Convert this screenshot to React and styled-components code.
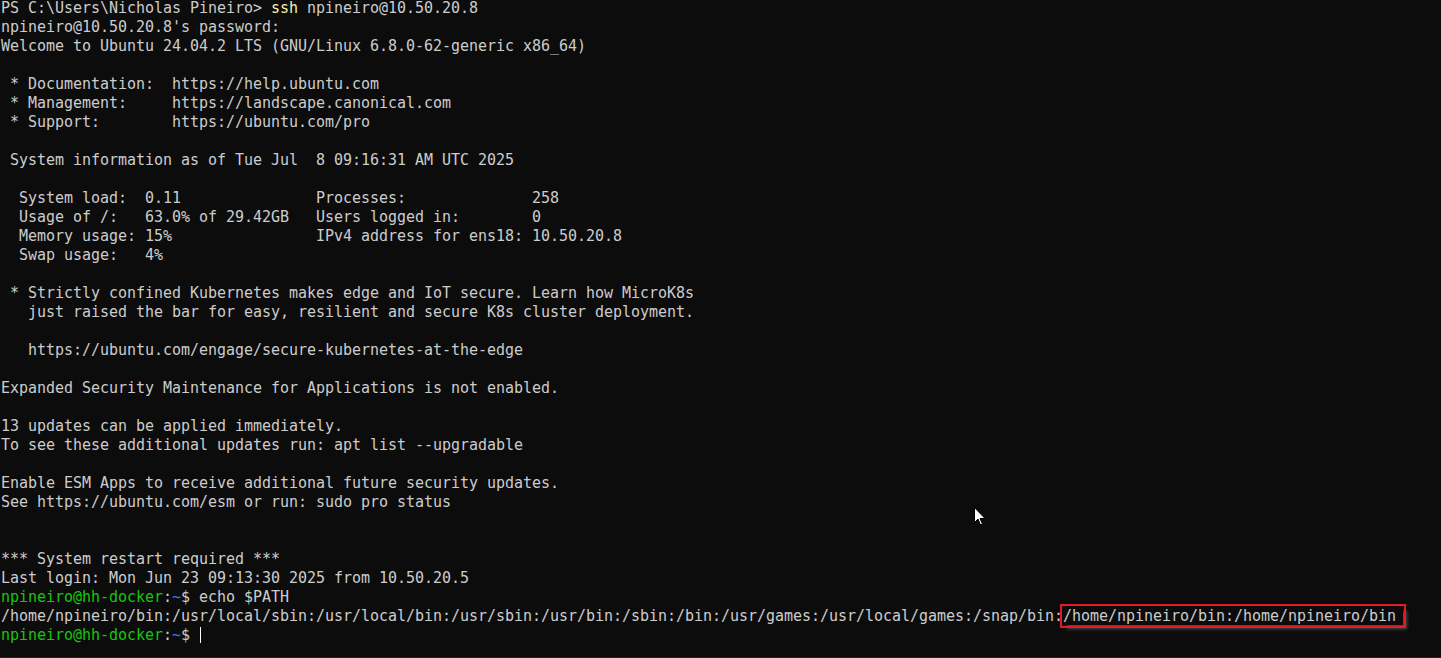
import React from "react";
import styled, {createGlobalStyle} from "styled-components";

const Global = createGlobalStyle`
    html, body {
        margin: 0;
        padding: 0;
        background: #0c0c0c;
    }
    * { box-sizing: border-box; }
`

const Screen = styled.div`
    position: relative;
    height: 658px;
    overflow: hidden;
    background: #0c0c0c;
    border-bottom: 1px solid #2a2230;
    color: #cccccc;
    font-family: "DejaVu Sans Mono", "Liberation Mono", monospace;
    font-size: 15px;
    letter-spacing: -0.03px;
    line-height: 19px;
    padding: 0 0 0 1px;
`

const Output = styled.div`
    margin-top: -1px;
`

const Line = styled.div`
    white-space: pre;
    height: 19px;
`

const Tint = styled.span`
    color: ${props => props.color};
`

const Marked = styled.span`
    padding-right: 7px;
    outline: 2px solid #e41b23;
    outline-offset: 1px;
    box-shadow: 4px 4px 3px rgba(80, 80, 80, 0.95);
`

const Caret = styled.span`
    display: inline-block;
    width: 1px;
    height: 16px;
    background: #ffffff;
    vertical-align: -3px;
    margin-left: 1px;
`

const Pointer = styled.svg`
    position: absolute;
    left: 974px;
    top: 507px;
`

const YELLOW = '#f9f1a5'
const GREEN = '#16c60c'
const BLUE = '#3b78ff'

const Prompt = () => (
    <>
        <Tint color={GREEN}>npineiro@hh-docker</Tint>:<Tint color={BLUE}>~</Tint>{"$ "}
    </>
)

const lines = [
    <>PS C:\Users\Nicholas Pineiro&gt; <Tint color={YELLOW}>ssh</Tint> npineiro@10.50.20.8</>,
    "npineiro@10.50.20.8's password:",
    "Welcome to Ubuntu 24.04.2 LTS (GNU/Linux 6.8.0-62-generic x86_64)",
    "",
    " * Documentation:  https://help.ubuntu.com",
    " * Management:     https://landscape.canonical.com",
    " * Support:        https://ubuntu.com/pro",
    "",
    " System information as of Tue Jul  8 09:16:31 AM UTC 2025",
    "",
    "  System load:  0.11               Processes:              258",
    "  Usage of /:   63.0% of 29.42GB   Users logged in:        0",
    "  Memory usage: 15%                IPv4 address for ens18: 10.50.20.8",
    "  Swap usage:   4%",
    "",
    " * Strictly confined Kubernetes makes edge and IoT secure. Learn how MicroK8s",
    "   just raised the bar for easy, resilient and secure K8s cluster deployment.",
    "",
    "   https://ubuntu.com/engage/secure-kubernetes-at-the-edge",
    "",
    "Expanded Security Maintenance for Applications is not enabled.",
    "",
    "13 updates can be applied immediately.",
    "To see these additional updates run: apt list --upgradable",
    "",
    "Enable ESM Apps to receive additional future security updates.",
    "See https://ubuntu.com/esm or run: sudo pro status",
    "",
    "",
    "*** System restart required ***",
    "Last login: Mon Jun 23 09:13:30 2025 from 10.50.20.5",
    <><Prompt />echo $PATH</>,
    <>/home/npineiro/bin:/usr/local/sbin:/usr/local/bin:/usr/sbin:/usr/bin:/sbin:/bin:/usr/games:/usr/local/games:/snap/bin:<Marked>/home/npineiro/bin:/home/npineiro/bin</Marked></>,
    <><Prompt /><Caret /></>,
]

export default function App() {
    return (
        <>
            <Global />
            <Screen>
                <Output>
                    {lines.map((line, i) => (
                        <Line key={i}>{line}</Line>
                    ))}
                </Output>
                <Pointer width="12" height="19" viewBox="0 0 12 19">
                    <path d="M0.5 0.5 L0.5 15.5 L4 12 L6.5 18 L8.5 17 L6 11.5 L11 11.5 Z" fill="#ffffff" stroke="#000000" strokeWidth="1" />
                </Pointer>
            </Screen>
        </>
    )
}
